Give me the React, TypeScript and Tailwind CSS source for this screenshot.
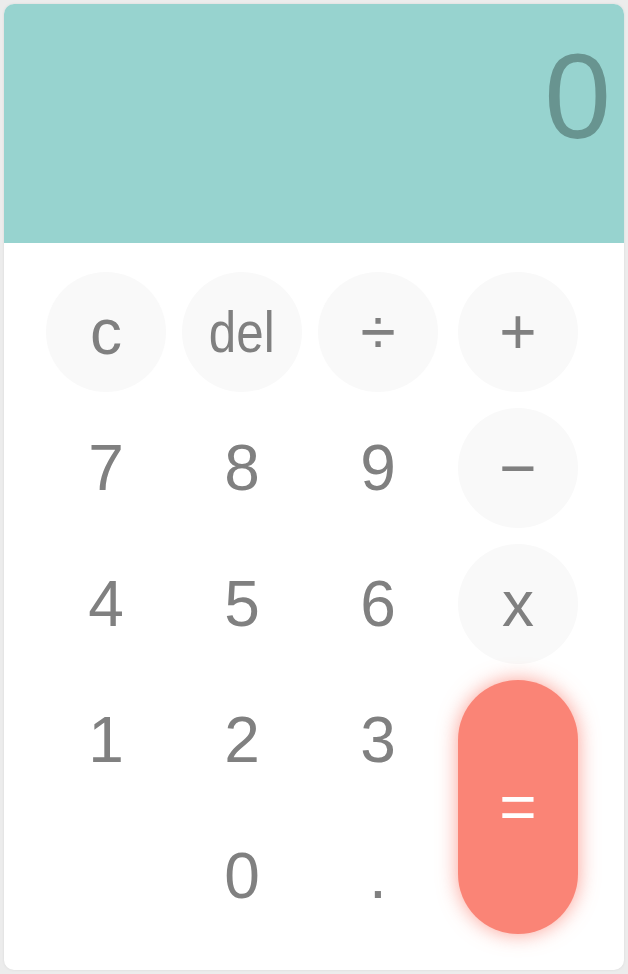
import React from 'react';

type Key = { label: string; round?: boolean; small?: boolean };

const keys: (Key | null)[] = [
  { label: 'c', round: true },
  { label: 'del', round: true, small: true },
  { label: '÷', round: true },
  { label: '+', round: true },
  { label: '7' },
  { label: '8' },
  { label: '9' },
  { label: '−', round: true },
  { label: '4' },
  { label: '5' },
  { label: '6' },
  { label: 'x', round: true },
  { label: '1' },
  { label: '2' },
  { label: '3' },
];

export default function App() {
  return (
    <div className="min-h-[974px] bg-[#ececec] p-[4px] font-['Liberation_Sans',Arial,sans-serif]">
      <div className="rounded-[10px] bg-white overflow-hidden shadow-[0_0_3px_rgba(0,0,0,0.08)]">
        {/* Display */}
        <div className="h-[239px] bg-[#97d3cf] flex justify-end items-start pt-[32px] pr-[13px]">
          <span className="text-[120px] leading-none text-[#689490]">0</span>
        </div>

        {/* Keypad */}
        <div className="pt-[29px] pb-[34px] pl-[42px]">
          <div className="grid grid-cols-[120px_120px_120px_124px] grid-rows-[repeat(5,120px)] gap-y-4 gap-x-4">
            {keys.map((k, i) => (
              <div key={i} className={i % 4 === 3 ? 'flex justify-end' : 'flex'}>
                <button
                  className={
                    'w-[120px] h-[120px] rounded-full flex items-center justify-center text-[#808080] leading-none ' +
                    (k?.round ? 'bg-[#f9f9f9] ' : '') +
                    (k?.small ? 'text-[58px] ' : 'text-[64px] ')
                  }
                >
                  <span className={k?.small ? 'inline-block scale-x-[0.85]' : ''}>{k?.label}</span>
                </button>
              </div>
            ))}
            <div />
            <div className="flex">
              <button className="w-[120px] h-[120px] flex items-center justify-center text-[64px] leading-none text-[#808080]">
                0
              </button>
            </div>
            <div className="flex">
              <button className="w-[120px] h-[120px] flex items-center justify-center text-[64px] leading-none text-[#808080]">
                .
              </button>
            </div>
            <div className="row-start-4 row-span-2 col-start-4 flex justify-end">
              <button className="w-[120px] h-[254px] rounded-full bg-[#fa8476] shadow-[0_0_20px_rgba(250,128,114,0.75)] flex items-center justify-center text-[64px] leading-none text-white">
                =
              </button>
            </div>
          </div>
        </div>
      </div>
    </div>
  );
}
